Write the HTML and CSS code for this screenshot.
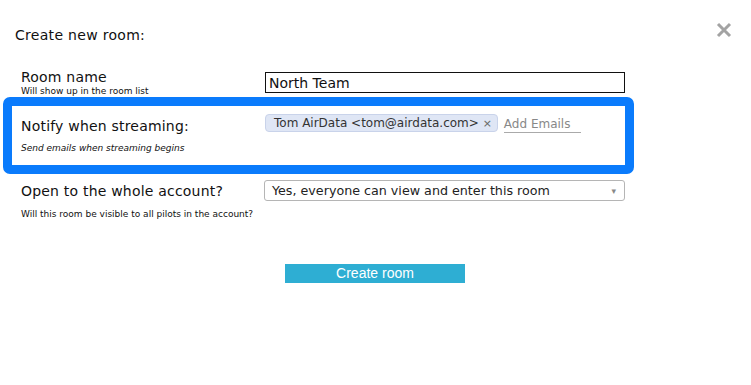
FILE: index.html
```html
<!DOCTYPE html>
<html>
<head>
    <title>Create new room</title>
    <link rel="stylesheet" href="styles.css">
</head>
<body>
    <div class="dialog">
        <a class="close-btn" href="#" title="Close">
            <svg width="16" height="16" viewBox="0 0 16 16">
                <path d="M2 2 L14 14 M14 2 L2 14" stroke="#a3a3a3" stroke-width="3" fill="none"/>
            </svg>
        </a>

        <h1 class="dialog-title">Create new room:</h1>

        <form class="room-form">
            <div class="form-row row-name">
                <div class="label-col">
                    <div class="label">Room name</div>
                    <div class="hint">Will show up in the room list</div>
                </div>
                <input type="text" class="text-input" value="North Team">
            </div>

            <div class="form-row row-notify">
                <div class="label-col">
                    <div class="label">Notify when streaming:</div>
                    <div class="hint hint-italic">Send emails when streaming begins</div>
                </div>
                <div class="email-field">
                    <span class="email-tag">Tom AirData &lt;tom@airdata.com&gt; <span class="tag-remove">×</span></span>
                    <span class="email-add">Add Emails</span>
                </div>
            </div>

            <div class="form-row row-open">
                <div class="label-col">
                    <div class="label">Open to the whole account?</div>
                    <div class="hint hint-spaced">Will this room be visible to all pilots in the account?</div>
                </div>
                <div class="select-box">
                    <span>Yes, everyone can view and enter this room</span>
                    <span class="select-arrow">▾</span>
                </div>
            </div>

            <div class="actions">
                <button type="button" class="create-btn">Create room</button>
            </div>
        </form>
    </div>
</body>
</html>
```

FILE: styles.css
```css
:root {
    --highlight-blue: #0a7bfc;
    --button-blue: #2eaed3;
    --tag-bg: #dfe6f5;
    --tag-border: #c9d3ea;
}

body {
    margin: 0;
    font-family: 'DejaVu Sans', Verdana, sans-serif;
    color: #111;
    background: #fff;
}

.dialog {
    position: relative;
    width: 751px;
    height: 385px;
    box-sizing: border-box;
    padding: 27px 0 0 15px;
}

.close-btn {
    position: absolute;
    top: 22px;
    right: 19px;
    display: block;
    width: 16px;
    height: 16px;
}

.close-btn svg {
    display: block;
}

.dialog-title {
    margin: 0;
    font-size: 14px;
    font-weight: normal;
    line-height: 17px;
    letter-spacing: 0.3px;
}

.room-form {
    margin-top: 25px;
    margin-left: 6px;
}

.form-row {
    display: grid;
    grid-template-columns: 244px 360px;
    align-items: start;
}

.label {
    font-size: 14px;
    line-height: 17px;
    letter-spacing: 0.2px;
}

.hint {
    font-size: 9px;
    line-height: 11px;
}

.hint-italic {
    font-style: italic;
    margin-top: 8px;
}

.hint-spaced {
    margin-top: 9px;
}

/* room name */
.text-input {
    margin-top: 3px;
    box-sizing: border-box;
    width: 360px;
    height: 21px;
    border: 1px solid #111;
    padding: 0 3px;
    font-family: 'DejaVu Sans', Verdana, sans-serif;
    font-size: 14px;
    color: #111;
    outline: none;
}

/* notify row, highlighted */
.row-notify {
    margin-left: -18px;
    width: 631px;
    box-sizing: border-box;
    border: 9px solid var(--highlight-blue);
    border-radius: 7px;
    padding: 8px 0 11px 9px;
    grid-template-columns: 244px 360px;
}

.row-notify .label-col {
    margin-top: 4px;
}

.email-field {
    display: flex;
    align-items: flex-start;
    gap: 6px;
}

.email-tag {
    display: inline-block;
    height: 18px;
    line-height: 17px;
    box-sizing: border-box;
    padding: 0 5px 0 8px;
    background: var(--tag-bg);
    border: 1px solid var(--tag-border);
    border-radius: 4px;
    font-size: 12px;
    color: #333;
    white-space: nowrap;
}

.tag-remove {
    font-size: 11px;
    color: #666;
}

.email-add {
    display: inline-block;
    width: 77px;
    margin-top: 3px;
    font-size: 12px;
    line-height: 15px;
    color: #888;
    border-bottom: 1px solid #aaa;
}

/* open row */
.row-open {
    margin-top: 6px;
}

.row-open .label-col {
    margin-top: 3px;
}

.select-box {
    display: flex;
    justify-content: space-between;
    align-items: center;
    box-sizing: border-box;
    width: 361px;
    height: 21px;
    margin-left: -1px;
    padding: 0 8px 0 7px;
    border: 1px solid #b5b5b5;
    border-radius: 3px;
    font-size: 12.7px;
    color: #222;
    background: #fff;
}

.select-arrow {
    font-size: 9px;
    color: #888;
}

.actions {
    margin-top: 44px;
    padding-left: 264px;
}

.create-btn {
    display: block;
    width: 180px;
    height: 19px;
    padding: 0;
    border: none;
    background: var(--button-blue);
    color: #fff;
    font-family: 'Liberation Sans', Arial, sans-serif;
    font-size: 14px;
    line-height: 19px;
    cursor: pointer;
}
```
